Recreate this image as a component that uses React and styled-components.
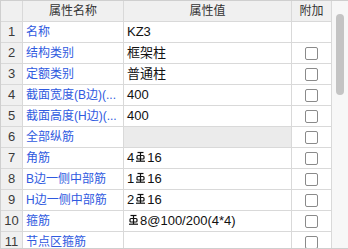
import React from 'react'
import styled, { createGlobalStyle } from 'styled-components'

const GlobalStyle = createGlobalStyle`
  html, body {
    margin: 0;
    padding: 0;
    background: #ffffff;
  }
  body {
    font-family: "Liberation Sans", "Noto Sans CJK SC", sans-serif;
    font-size: 12px;
  }
`

// HRB400 steel grade symbol
const Steel = () => (
  <SteelIcon viewBox='0 0 11 12' width='11' height='12'>
    <line x1='2.5' y1='1.5' x2='8.5' y2='1.5' />
    <line x1='5.5' y1='1.5' x2='5.5' y2='10' />
    <path d='M3 4.5 H8 Q9 4.5 9 5.5 V7 Q9 8 8 8 H3 Q2 8 2 7 V5.5 Q2 4.5 3 4.5 Z' />
    <line x1='1' y1='10.2' x2='10' y2='10.2' />
  </SteelIcon>
)

const rows = [
  { name: '名称', value: 'KZ3', check: false },
  { name: '结构类别', value: '框架柱', check: true },
  { name: '定额类别', value: '普通柱', check: true },
  { name: '截面宽度(B边)(...', value: '400', check: true },
  { name: '截面高度(H边)(...', value: '400', check: true },
  { name: '全部纵筋', value: '', check: true, grey: true },
  { name: '角筋', value: ['4', 'S', '16'], check: true },
  { name: 'B边一侧中部筋', value: ['1', 'S', '16'], check: true },
  { name: 'H边一侧中部筋', value: ['2', 'S', '16'], check: true },
  { name: '箍筋', value: ['S', '8@100/200(4*4)'], check: true },
  { name: '节点区箍筋', value: '', check: true },
]

const renderValue = (value) => {
  if (!Array.isArray(value)) return value
  return value.map((part, i) =>
    part === 'S' ? <Steel key={i} /> : <span key={i}>{part}</span>
  )
}

const App = () => {
  return (
    <>
      <GlobalStyle />
      <Frame>
        <Grid>
          <HeadCell />
          <HeadCell>属性名称</HeadCell>
          <HeadCell>属性值</HeadCell>
          <HeadCell>附加</HeadCell>
          {rows.map((row, index) => (
            <React.Fragment key={index}>
              <NumCell>{index + 1}</NumCell>
              <NameCell>{row.name}</NameCell>
              <ValueCell $grey={row.grey} $indent={index === 9}>
                {renderValue(row.value)}
              </ValueCell>
              <CheckCell>{row.check && <Box />}</CheckCell>
            </React.Fragment>
          ))}
        </Grid>
        <ScrollBar>
          <Thumb />
        </ScrollBar>
      </Frame>
    </>
  )
}

const Frame = styled.div`
  width: 348px;
  height: 249px;
  box-sizing: border-box;
  border-top: 1px solid #cfcfcf;
  border-left: 1px solid #cfcfcf;
  border-bottom: 1px solid #cfcfcf;
  display: flex;
  overflow: hidden;
`

const Grid = styled.div`
  display: grid;
  grid-template-columns: 21px 100px 167px 39px;
  grid-auto-rows: 20px;
  gap: 1px;
  background: #d9d9d9;
  border-right: 1px solid #d9d9d9;
  align-content: start;
  height: max-content;
`

const Cell = styled.div`
  display: flex;
  align-items: center;
  white-space: nowrap;
  overflow: hidden;
  line-height: 20px;
`

const HeadCell = styled(Cell)`
  background: #f0f0f0;
  color: #333333;
  justify-content: center;
`

const NumCell = styled(Cell)`
  background: #f0f0f0;
  color: #3a3a3a;
  justify-content: center;
  font-size: 13px;
`

const NameCell = styled(Cell)`
  background: #ffffff;
  color: #2f5ae0;
  padding-left: 3px;
`

const ValueCell = styled(Cell)`
  background: ${(p) => (p.$grey ? '#ebebeb' : '#ffffff')};
  color: #111111;
  padding-left: ${(p) => (p.$indent ? '3px' : '3px')};
  font-size: 13px;
`

const SteelIcon = styled.svg`
  fill: none;
  stroke: #111111;
  stroke-width: 1.2;
  margin: 0 1px 2px 1px;
`

const CheckCell = styled(Cell)`
  background: #ffffff;
  justify-content: center;
`

const Box = styled.div`
  width: 13px;
  height: 13px;
  box-sizing: border-box;
  border: 1px solid #8a8a8a;
  border-radius: 2px;
  background: #ffffff;
`

const ScrollBar = styled.div`
  flex: 1;
  background: #f7f7f7;
  display: flex;
  justify-content: center;
  padding-top: 13px;
`

const Thumb = styled.div`
  width: 8px;
  height: 81px;
  border-radius: 4px;
  background: #c4c4c4;
`

export default App
